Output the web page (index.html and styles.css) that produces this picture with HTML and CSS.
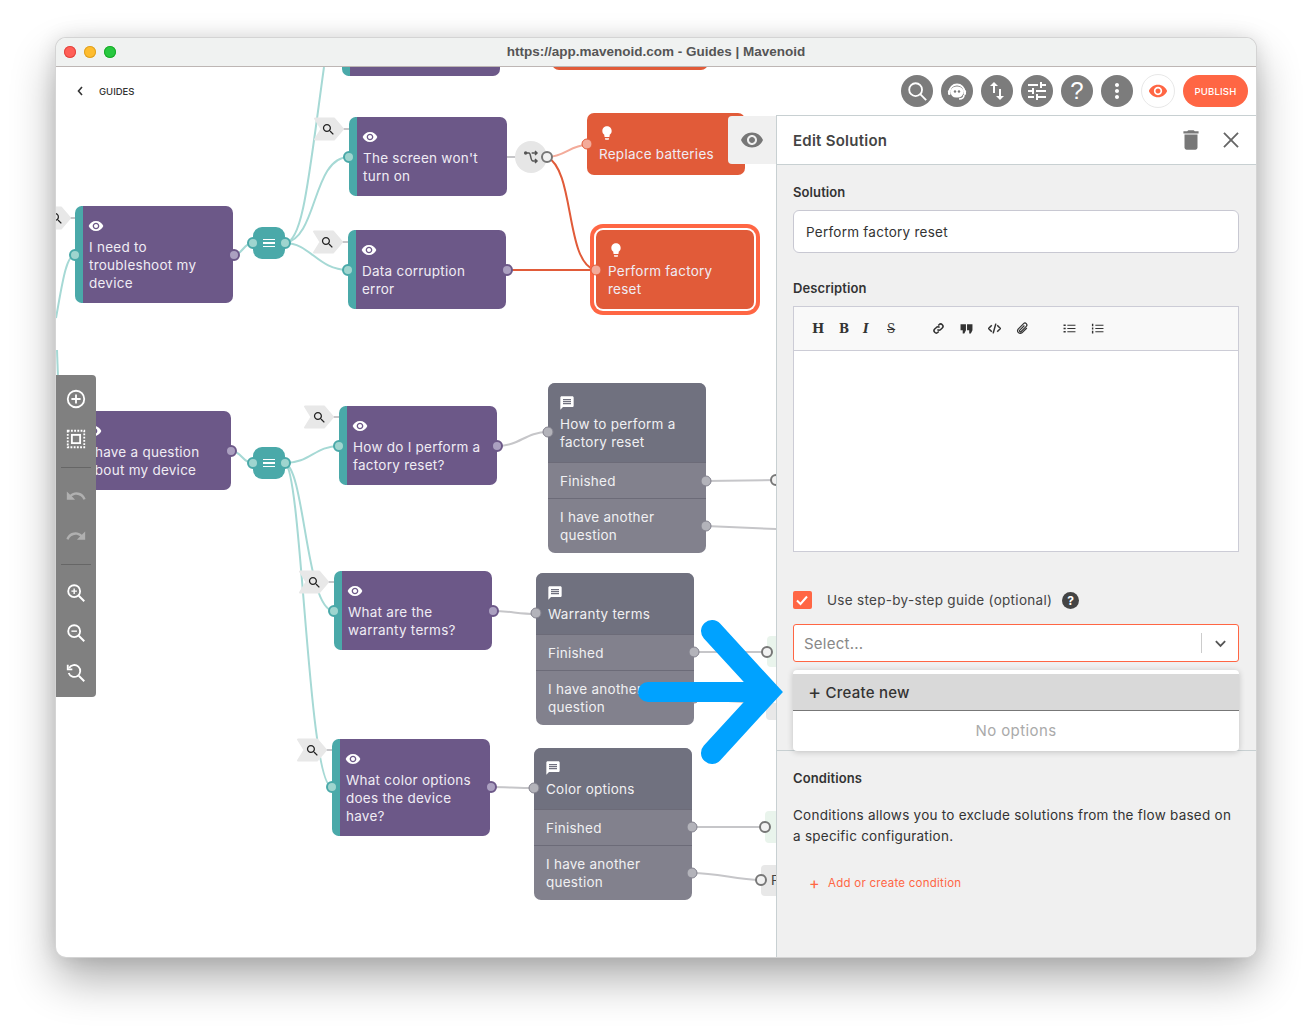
FILE: index.html
```html
<!DOCTYPE html>
<html lang="en">
<head>
<meta charset="utf-8">
<title>Guides | Mavenoid</title>
<link rel="stylesheet" href="styles.css">
</head>
<body>
<svg class="defs" width="0" height="0" aria-hidden="true">
  <defs>
    <symbol id="i-eye" viewBox="0 0 24 24"><path d="M12 4.5C7 4.5 2.73 7.61 1 12c1.73 4.39 6 7.5 11 7.5s9.27-3.11 11-7.5c-1.73-4.39-6-7.5-11-7.5zM12 17c-2.76 0-5-2.24-5-5s2.24-5 5-5 5 2.24 5 5-2.24 5-5 5zm0-8c-1.66 0-3 1.34-3 3s1.34 3 3 3 3-1.34 3-3-1.34-3-3-3z"/></symbol>
    <symbol id="i-bulb" viewBox="0 0 24 24"><path d="M9 21c0 .55.45 1 1 1h4c.55 0 1-.45 1-1v-1H9v1zm3-19C8.14 2 5 5.14 5 9c0 2.38 1.19 4.47 3 5.74V17c0 .55.45 1 1 1h6c.55 0 1-.45 1-1v-2.26c1.81-1.27 3-3.36 3-5.74 0-3.86-3.14-7-7-7z"/></symbol>
    <symbol id="i-msg" viewBox="0 0 24 24"><path d="M20 2H4c-1.1 0-1.99.9-1.99 2L2 22l4-4h14c1.1 0 2-.9 2-2V4c0-1.1-.9-2-2-2zm-2 12H6v-2h12v2zm0-3H6V9h12v2zm0-3H6V6h12v2z"/></symbol>
    <symbol id="i-search" viewBox="0 0 24 24"><path d="M15.5 14h-.79l-.28-.27C15.41 12.59 16 11.11 16 9.5 16 5.91 13.09 3 9.5 3S3 5.91 3 9.5 5.91 16 9.5 16c1.61 0 3.09-.59 4.23-1.57l.27.28v.79l5 4.99L20.49 19l-4.99-5zm-6 0C7.01 14 5 11.99 5 9.5S7.01 5 9.5 5 14 7.01 14 9.5 11.99 14 9.5 14z"/></symbol>
    <symbol id="i-tag" viewBox="0 0 32 24"><path d="M2 1.5H21L30 12L21 22.500H2L8.500 12Z" fill="#e8e8e8" stroke="#e8e8e8" stroke-width="2" stroke-linejoin="round"/></symbol>
  </defs>
</svg>

<div class="window">
  <div class="titlebar">
    <div class="lights">
      <span class="light light-red"></span>
      <span class="light light-yellow"></span>
      <span class="light light-green"></span>
    </div>
    <div class="window-title">https://app.mavenoid.com - Guides | Mavenoid</div>
  </div>

  <div class="main">
    <div class="viewport">
      <div class="canvas">
        <svg class="edges" width="1312" height="1031" viewBox="0 0 1312 1031">
          <g class="edge-teal">
            <path d="M285 243C303 243 309 175 324 67"/>
            <path d="M285 243C318 238 312 157 349 157"/>
            <path d="M285 243C310 243 318 270 348 270"/>
            <path d="M233 255C243 255 243 243 253 243"/>
            <path d="M56 318C62 285 66 255 75 255"/>
            <path d="M57 350L58 378"/>
            <path d="M231 451C242 451 242 463 253 463"/>
            <path d="M285 463C310 463 315 446 339 446"/>
            <path d="M285 463C305 470 306 611 334 611"/>
            <path d="M285 463C302 470 308 787 332 787"/>
          </g>
          <g class="edge-gray">
            <path d="M507 157H516"/>
            <path d="M497 446C520 446 525 432 548 432"/>
            <path d="M492 611C510 611 518 614 536 614"/>
            <path d="M490 787C505 787 518 788 534 788"/>
            <path d="M706 481L776 480"/>
            <path d="M706 526L776 529"/>
            <path d="M694 652L767 652"/>
            <path d="M694 698C720 700 750 703 776 704"/>
            <path d="M692 827L765 827"/>
            <path d="M692 873C720 873 735 880 761 880"/>
            <path d="M338 129H349"/>
            <path d="M337 242H348"/>
            <path d="M329 417H340"/>
            <path d="M324 582H335"/>
            <path d="M322 750H333"/>
            <path d="M66 218H76"/>
          </g>
          <path class="edge-salmon" d="M547 157C565 157 570 145 587 145"/>
          <path class="edge-orange" d="M547 157C575 170 565 262 595 270"/>
          <path class="edge-orange" d="M506 270H595"/>
        </svg>

        <svg class="tag tag-1"><use href="#i-tag"/></svg>
        <svg class="tag tag-2"><use href="#i-tag"/></svg>
        <svg class="tag tag-3"><use href="#i-tag"/></svg>
        <svg class="tag tag-4"><use href="#i-tag"/></svg>
        <svg class="tag tag-5"><use href="#i-tag"/></svg>
        <svg class="tag tag-6"><use href="#i-tag"/></svg>
        <svg class="glass glass-1"><use href="#i-search"/></svg>
        <svg class="glass glass-2"><use href="#i-search"/></svg>
        <svg class="glass glass-3"><use href="#i-search"/></svg>
        <svg class="glass glass-4"><use href="#i-search"/></svg>
        <svg class="glass glass-5"><use href="#i-search"/></svg>
        <svg class="glass glass-6"><use href="#i-search"/></svg>

        <div class="node purple pos-top-purple"></div>
        <div class="node orange pos-top-orange"></div>

        <div class="node purple pos-need"><svg class="ico"><use href="#i-eye"/></svg><p>I need to troubleshoot my device</p></div>
        <div class="node purple pos-screen"><svg class="ico"><use href="#i-eye"/></svg><p>The screen won't turn on</p></div>
        <div class="node purple pos-data"><svg class="ico"><use href="#i-eye"/></svg><p>Data corruption error</p></div>
        <div class="node purple pos-have"><svg class="ico"><use href="#i-eye"/></svg><p>I have a question about my device</p></div>
        <div class="node purple pos-how"><svg class="ico"><use href="#i-eye"/></svg><p>How do I perform a factory reset?</p></div>
        <div class="node purple pos-what"><svg class="ico"><use href="#i-eye"/></svg><p>What are the warranty terms?</p></div>
        <div class="node purple pos-color"><svg class="ico"><use href="#i-eye"/></svg><p>What color options does the device have?</p></div>

        <div class="node orange pos-replace"><svg class="ico"><use href="#i-bulb"/></svg><p>Replace batteries</p></div>
        <div class="node orange selected pos-reset"><svg class="ico"><use href="#i-bulb"/></svg><p>Perform factory reset</p></div>

        <div class="msg pos-m1">
          <div class="msg-head"><svg class="ico"><use href="#i-msg"/></svg><p>How to perform a factory reset</p></div>
          <div class="msg-row">Finished</div>
          <div class="msg-row">I have another question</div>
        </div>
        <div class="msg pos-m2">
          <div class="msg-head"><svg class="ico"><use href="#i-msg"/></svg><p>Warranty terms</p></div>
          <div class="msg-row">Finished</div>
          <div class="msg-row">I have another question</div>
        </div>
        <div class="msg pos-m3">
          <div class="msg-head"><svg class="ico"><use href="#i-msg"/></svg><p>Color options</p></div>
          <div class="msg-row">Finished</div>
          <div class="msg-row">I have another question</div>
        </div>

        <div class="menu-node pos-menu1"><span></span><span></span><span></span></div>
        <div class="menu-node pos-menu2"><span></span><span></span><span></span></div>

        <div class="branch">
          <svg viewBox="0 0 24 24" class="branch-ico"><circle cx="4" cy="6" r="2.600" fill="#555"/><path d="M4 6H9C12 6 11 18 15 18H20M13 6H20M18 3L21 6L18 9M18 15L21 18L18 21" fill="none" stroke="#555" stroke-width="2.200"/></svg>
        </div>

        <div class="stub stub-green stub-g1"></div>
        <div class="stub stub-green stub-g2"></div>
        <div class="stub stub-gray stub-g3"></div>
        <div class="stub stub-gray stub-g4">F</div>

        <svg class="ports" width="1312" height="1031" viewBox="0 0 1312 1031">
          <g class="p-teal">
            <circle cx="75" cy="255" r="5"/><circle cx="253" cy="243" r="5"/><circle cx="285" cy="243" r="5"/>
            <circle cx="349" cy="157" r="5"/><circle cx="348" cy="270" r="5"/>
            <circle cx="253" cy="463" r="5"/><circle cx="285" cy="463" r="5"/>
            <circle cx="339" cy="446" r="5"/><circle cx="334" cy="611" r="5"/><circle cx="332" cy="787" r="5"/>
          </g>
          <g class="p-purple">
            <circle cx="234" cy="255" r="5"/><circle cx="507" cy="270" r="5"/><circle cx="231" cy="451" r="5"/>
            <circle cx="497" cy="446" r="5"/><circle cx="493" cy="611" r="5"/><circle cx="491" cy="787" r="5"/>
          </g>
          <g class="p-gray">
            <circle cx="548" cy="432" r="5"/><circle cx="706" cy="481" r="5"/><circle cx="706" cy="526" r="5"/>
            <circle cx="536" cy="613" r="5"/><circle cx="694" cy="652" r="5"/><circle cx="694" cy="698" r="5"/>
            <circle cx="534" cy="788" r="5"/><circle cx="692" cy="827" r="5"/><circle cx="692" cy="873" r="5"/>
          </g>
          <g class="p-open">
            <circle cx="547" cy="157" r="5"/><circle cx="776" cy="480" r="5"/>
            <circle cx="767" cy="652" r="5"/><circle cx="765" cy="827" r="5"/><circle cx="761" cy="880" r="5"/>
          </g>
          <g class="p-orange">
            <circle cx="587" cy="144" r="5"/><circle cx="596" cy="270" r="5"/>
          </g>
        </svg>
      </div>
    </div>

    <div class="topbar">
      <a class="back">
        <svg class="back-ico" viewBox="0 0 8 12"><path d="M6 2L2.500 6L6 10" fill="none" stroke="#333" stroke-width="1.600"/></svg>
        <span class="back-label">GUIDES</span>
      </a>
      <div class="actions">
        <span class="round"><svg viewBox="0 0 24 24" class="ic-search"><circle cx="10.500" cy="10.500" r="7" fill="none" stroke="#fff" stroke-width="2"/><path d="M15.500 15.500L22 22" stroke="#fff" stroke-width="2"/></svg></span>
        <span class="round"><svg viewBox="0 0 24 24" class="ic-24"><path d="M4.500 13a7.500 7.500 0 0 1 15 0" fill="none" stroke="#fff" stroke-width="1.800"/><rect x="5.500" y="7.500" width="13" height="11" rx="5.500" fill="#fff"/><rect x="3" y="11" width="2.500" height="5" rx="1.200" fill="#fff"/><rect x="18.500" y="11" width="2.500" height="5" rx="1.200" fill="#fff"/><circle cx="10" cy="12.500" r="1.200" fill="#7c7c7c"/><circle cx="14" cy="12.500" r="1.200" fill="#7c7c7c"/><path d="M19 16c0 3-2 4-5 4" fill="none" stroke="#fff" stroke-width="1.600"/></svg></span>
        <span class="round"><svg viewBox="0 0 24 24" class="ic-24"><path d="M16 17.010V10h-2v7.010h-3L15 21l4-3.990h-3zM9 3L5 6.990h3V14h2V6.990h3L9 3z"/></svg></span>
        <span class="round"><svg viewBox="0 0 24 24" class="ic-24"><path d="M3 17v2h6v-2H3zM3 5v2h10V5H3zm10 16v-2h8v-2h-8v-2h-2v6h2zM7 9v2H3v2h4v2h2V9H7zm14 4v-2H11v2h10zm-6-4h2V7h4V5h-4V3h-2v6z"/></svg></span>
        <span class="round round-q">?</span>
        <span class="round"><svg viewBox="0 0 24 24" class="ic-24"><path d="M12 8c1.100 0 2-.9 2-2s-.9-2-2-2-2 .9-2 2 .9 2 2 2zm0 2c-1.100 0-2 .9-2 2s.9 2 2 2 2-.9 2-2-.9-2-2-2zm0 6c-1.100 0-2 .9-2 2s.9 2 2 2 2-.9 2-2-.9-2-2-2z"/></svg></span>
        <span class="round-eye"><svg class="ic-eye"><use href="#i-eye"/></svg></span>
        <span class="publish">PUBLISH</span>
      </div>
    </div>

    <div class="panel-row">
      <aside class="panel">
        <div class="eye-tab"><svg class="ic-tab"><use href="#i-eye"/></svg></div>
        <header class="panel-head">
          <h2>Edit Solution</h2>
          <div class="panel-tools">
            <svg viewBox="0 0 24 24" class="tool-trash"><path d="M6 19c0 1.100.9 2 2 2h8c1.100 0 2-.9 2-2V7H6v12zM19 4h-3.500l-1-1h-5l-1 1H5v2h14V4z"/></svg>
            <svg viewBox="0 0 24 24" class="tool-close"><path d="M5.500 5.500L18.500 18.500M18.500 5.500L5.500 18.500" fill="none" stroke="#666" stroke-width="1.700"/></svg>
          </div>
        </header>

        <div class="panel-body">
          <div class="label label-solution">Solution</div>
          <div class="input">Perform factory reset</div>

          <div class="label label-desc">Description</div>
          <div class="editor">
            <div class="editor-bar">
              <span class="fmt fmt-h">H</span>
              <span class="fmt fmt-b">B</span>
              <span class="fmt fmt-i">I</span>
              <span class="fmt fmt-s">S</span>
              <svg viewBox="0 0 24 24" class="tb-ic tb-link"><path d="M10 14a4 4 0 0 0 6 0l3-3a4 4 0 0 0-6-6l-1.500 1.500M14 10a4 4 0 0 0-6 0l-3 3a4 4 0 0 0 6 6l1.500-1.500" fill="none" stroke="#333" stroke-width="2.800"/></svg>
              <svg viewBox="0 0 24 24" class="tb-ic tb-quote"><path d="M5 21h3l3-6V4H1v11h4zm12 0h3l3-6V4H13v11h4z" fill="#333"/></svg>
              <svg viewBox="0 0 24 24" class="tb-ic tb-code"><path d="M7 6l-6 6 6 6M17 6l6 6-6 6M14.500 3l-5 18" fill="none" stroke="#333" stroke-width="2.800"/></svg>
              <svg viewBox="0 0 24 24" class="tb-ic tb-clip"><path d="M20 11l-9 9a5 5 0 0 1-7-7l10-10a3.300 3.300 0 0 1 5 5l-9.500 9.500a1.600 1.600 0 0 1-2.500-2.500l8.500-8.500" fill="none" stroke="#333" stroke-width="2.200"/></svg>
              <svg viewBox="0 0 24 24" class="tb-ic tb-ul"><path d="M8 6h15M8 12h15M8 18h15" stroke="#333" stroke-width="2"/><path d="M1 6h4M1 12h4M1 18h4" stroke="#333" stroke-width="3"/></svg>
              <svg viewBox="0 0 24 24" class="tb-ic tb-ol"><path d="M8 6h15M8 12h15M8 18h15" stroke="#333" stroke-width="2"/><path d="M3 3v5M3 10v4M3 16v5" stroke="#333" stroke-width="2.600"/></svg>
            </div>
            <div class="editor-area"></div>
          </div>

          <div class="check-row">
            <span class="checkbox"><svg viewBox="0 0 18 18"><path d="M4 9.500L7.500 13L14 5.500" fill="none" stroke="#fff" stroke-width="2"/></svg></span>
            <span class="check-label">Use step-by-step guide (optional)</span>
            <span class="hint">?</span>
          </div>

          <div class="select">
            <span class="select-ph">Select...</span>
            <span class="select-sep"></span>
            <svg viewBox="0 0 14 14" class="select-chev"><path d="M2 4.500L7 9.500L12 4.500" fill="none" stroke="#555" stroke-width="2"/></svg>
          </div>

          <div class="dropdown">
            <div class="dropdown-new"><span class="plus">+</span>Create new</div>
            <div class="dropdown-empty">No options</div>
          </div>
        </div>

        <section class="conditions">
          <div class="label">Conditions</div>
          <p class="cond-text">Conditions allows you to exclude solutions from the flow based on a specific configuration.</p>
          <a class="cond-add"><span class="cond-plus">+</span>Add or create condition</a>
        </section>
      </aside>
    </div>

    <nav class="toolbar">
      <svg viewBox="0 0 24 24" class="tl"><circle cx="12" cy="12" r="9" fill="none" stroke="#fff" stroke-width="2"/><path d="M12 7v10M7 12h10" stroke="#fff" stroke-width="2"/></svg>
      <svg viewBox="0 0 24 24" class="tl"><rect x="3" y="3" width="18" height="18" fill="none" stroke="#fff" stroke-width="2" stroke-dasharray="2 1.500"/><rect x="7.500" y="7.500" width="9" height="9" fill="none" stroke="#fff" stroke-width="2"/></svg>
      <hr class="tl-sep">
      <svg viewBox="0 0 24 24" class="tl tl-off"><path d="M12.500 8c-2.650 0-5.050.99-6.900 2.600L2 7v9h9l-3.620-3.620c1.390-1.160 3.160-1.880 5.120-1.880 3.540 0 6.550 2.310 7.600 5.500l2.370-.78C21.080 11.030 17.150 8 12.500 8z"/></svg>
      <svg viewBox="0 0 24 24" class="tl tl-off"><path d="M18.400 10.600C16.550 8.990 14.150 8 11.500 8c-4.650 0-8.580 3.030-9.960 7.220L3.900 16c1.050-3.190 4.050-5.500 7.600-5.500 1.950 0 3.730.72 5.120 1.880L13 16h9V7l-3.600 3.600z"/></svg>
      <hr class="tl-sep">
      <svg viewBox="0 0 24 24" class="tl"><circle cx="10" cy="10" r="6.500" fill="none" stroke="#fff" stroke-width="2"/><path d="M15 15l6 6" stroke="#fff" stroke-width="2.200"/><path d="M10 7v6M7 10h6" stroke="#fff" stroke-width="1.500"/></svg>
      <svg viewBox="0 0 24 24" class="tl"><circle cx="10" cy="10" r="6.500" fill="none" stroke="#fff" stroke-width="2"/><path d="M15 15l6 6" stroke="#fff" stroke-width="2.200"/><path d="M7 10h6" stroke="#fff" stroke-width="1.500"/></svg>
      <svg viewBox="0 0 24 24" class="tl"><path d="M4.500 6.500A6.500 6.500 0 1 1 4 12" fill="none" stroke="#fff" stroke-width="2"/><path d="M3 3v5h5" fill="none" stroke="#fff" stroke-width="2"/><path d="M15 15l6 6" stroke="#fff" stroke-width="2.200"/></svg>
    </nav>

    <svg class="arrow" width="1312" height="1031" viewBox="0 0 1312 1031">
      <path d="M712 631L768 692L712 753" fill="none" stroke="#00a2ff" stroke-width="22" stroke-linecap="round" stroke-linejoin="miter"/>
      <path d="M648 692H768" fill="none" stroke="#00a2ff" stroke-width="20" stroke-linecap="round"/>
    </svg>
  </div>
</div>
</body>
</html>
```

FILE: styles.css
```css
* { box-sizing: border-box; }
html, body { margin: 0; padding: 0; background: #fff; }
body {
  width: 1312px;
  height: 1031px;
  overflow: hidden;
  padding: 38px 56px 0;
  font-family: Inter, "Liberation Sans", sans-serif;
  letter-spacing: .25px;
  color: #333;
}
.defs { position: absolute; }
.window {
  width: 1200px;
  height: 919px;
  border-radius: 10px;
  overflow: hidden;
  display: flex;
  flex-direction: column;
  background: #fff;
  box-shadow: 0 0 0 1px #d4d4d4, 0 22px 45px rgba(0, 0, 0, .32), 0 0 20px rgba(0, 0, 0, .12);
}
.titlebar {
  height: 29px;
  flex: none;
  background: #f0f2f1;
  border-bottom: 1px solid #bdb6b4;
  display: flex;
  align-items: center;
  position: relative;
}
.lights { display: flex; gap: 8px; padding-left: 8px; }
.light { width: 12px; height: 12px; border-radius: 50%; }
.light-red { background: #ff5f57; box-shadow: inset 0 0 0 1px #e2463f; }
.light-yellow { background: #febc2e; box-shadow: inset 0 0 0 1px #dfa123; }
.light-green { background: #28c840; box-shadow: inset 0 0 0 1px #1aab29; }
.window-title {
  position: absolute;
  left: 0;
  right: 0;
  top: 6px;
  text-align: center;
  font: bold 13.5px "Liberation Sans", Arial, sans-serif;
  letter-spacing: 0;
  color: #555;
}
.main { position: relative; flex: 1; min-height: 0; display: flex; flex-direction: column; }
.viewport { position: absolute; inset: 0; overflow: hidden; }
.canvas { position: absolute; left: -56px; top: -67px; width: 1312px; height: 1031px; }
.edges, .ports { position: absolute; left: 0; top: 0; pointer-events: none; }
.arrow { position: absolute; left: -56px; top: -67px; pointer-events: none; }
.edges path { fill: none; }
.edge-teal path { stroke: #a6d9d5; stroke-width: 2; }
.edge-gray path { stroke: #c6c6c9; stroke-width: 2; }
.edge-salmon { stroke: #f3ab9a; stroke-width: 2; }
.edge-orange { stroke: #e15b39; stroke-width: 2; }

.tag { position: absolute; width: 32px; height: 24px; }
.tag-1 { left: 313px; top: 117px; }
.tag-2 { left: 312px; top: 230px; }
.tag-3 { left: 303px; top: 405px; }
.tag-4 { left: 298px; top: 570px; }
.tag-5 { left: 296px; top: 738px; }
.tag-6 { left: 40px; top: 206px; }
.glass { position: absolute; width: 15px; height: 15px; fill: #222; }
.glass-1 { left: 321px; top: 122px; }
.glass-2 { left: 320px; top: 235px; }
.glass-3 { left: 312px; top: 410px; }
.glass-4 { left: 307px; top: 575px; }
.glass-5 { left: 305px; top: 743px; }
.glass-6 { left: 49px; top: 211px; }

.node {
  position: absolute;
  width: 158px;
  padding: 13px 14px 11px 6px;
  border-radius: 7px;
  color: #f0ecf4;
  font-size: 13.5px;
  line-height: 18px;
}
.node p, .msg p { margin: 5px 0 0; }
.ico { display: block; width: 16px; height: 16px; margin: -1px 0 -1px -1px; fill: #fff; }
.purple { background: #6c5888; border-left: 8px solid #4aa9a9; }
.orange { background: #e15b39; padding: 13px 12px 12px 12px; }
.orange .ico { margin-left: 0; }
.selected { padding: 13px 30px 11px 12px; box-shadow: 0 0 0 2px #fff, 0 0 0 6px #ff6644; }
.pos-top-purple { left: 342px; top: 0; height: 76px; }
.pos-top-orange { left: 552px; top: 0; width: 156px; height: 70px; }
.pos-need { left: 75px; top: 206px; padding-right: 6px; }
.pos-screen { left: 349px; top: 117px; }
.pos-data { left: 348px; top: 230px; }
.pos-have { left: 73px; top: 411px; }
.pos-how { left: 339px; top: 406px; padding-right: 6px; }
.pos-what { left: 334px; top: 571px; }
.pos-color { left: 332px; top: 739px; padding-right: 6px; }
.pos-replace { left: 587px; top: 113px; }
.pos-reset { left: 596px; top: 230px; }

.msg {
  position: absolute;
  width: 158px;
  border-radius: 7px;
  overflow: hidden;
  color: #f0f0f2;
  font-size: 13.5px;
  line-height: 18px;
  background: #82818d;
}
.msg-head { background: #70717f; padding: 13px 12px 11px; }
.msg-row { padding: 9px 12px 8px; border-top: 1px solid #6c6b78; }
.msg-row:last-child { padding-bottom: 9px; }
.pos-m1 { left: 548px; top: 383px; }
.pos-m2 { left: 536px; top: 573px; }
.pos-m3 { left: 534px; top: 748px; }

.menu-node {
  position: absolute;
  width: 32px;
  height: 32px;
  border-radius: 9px;
  background: #4aa9a9;
  display: flex;
  flex-direction: column;
  justify-content: center;
  align-items: center;
  gap: 2px;
}
.menu-node span { width: 12px; height: 1.5px; background: #fff; }
.pos-menu1 { left: 253px; top: 227px; }
.pos-menu2 { left: 253px; top: 447px; }
.branch {
  position: absolute;
  left: 515px;
  top: 141px;
  width: 32px;
  height: 32px;
  border-radius: 50%;
  background: #e6e6e6;
  display: flex;
  align-items: center;
  justify-content: center;
}
.branch-ico { width: 16px; height: 16px; }
.stub { position: absolute; border-radius: 4px; }
.stub-green { background: #e9f4ec; width: 14px; }
.stub-gray { background: #e8e8e8; width: 20px; color: #444; font-size: 13.5px; line-height: 30px; padding-left: 10px; }
.stub-g1 { left: 767px; top: 636px; height: 31px; }
.stub-g2 { left: 765px; top: 811px; height: 32px; }
.stub-g3 { left: 766px; top: 703px; height: 17px; }
.stub-g4 { left: 761px; top: 865px; height: 31px; }

.p-teal circle { fill: #9fd5cf; stroke: #4aa9a9; stroke-width: 2; }
.p-purple circle { fill: #aba0c0; stroke: #6c5888; stroke-width: 2; }
.p-gray circle { fill: #b3b3ba; stroke: #82818d; stroke-width: 1; }
.p-open circle { fill: #f2f2f2; stroke: #777; stroke-width: 2; }
.p-orange circle { fill: #f3ab9a; stroke: #e15b39; stroke-width: 1; }

.topbar {
  position: relative;
  flex: none;
  height: 48px;
  display: flex;
  align-items: center;
  justify-content: space-between;
  padding: 0 8px 0 20px;
}
.back { display: flex; align-items: center; gap: 15px; }
.back-ico { width: 8px; height: 12px; }
.back-label { font-size: 9.5px; font-weight: 500; letter-spacing: 0; color: #333; }
.actions { display: flex; align-items: center; gap: 8px; }
.round {
  width: 32px;
  height: 32px;
  border-radius: 50%;
  background: #7c7c7c;
  display: flex;
  align-items: center;
  justify-content: center;
  color: #fff;
}
.ic-24 { width: 24px; height: 24px; fill: #fff; }
.ic-search { width: 22px; height: 22px; }
.round-q { font: 24px/32px "Liberation Sans", sans-serif; }
.round-eye {
  width: 34px;
  height: 34px;
  border-radius: 50%;
  background: #fff;
  border: 1px solid #e8e8e8;
  display: flex;
  align-items: center;
  justify-content: center;
}
.ic-eye { width: 20px; height: 20px; fill: #ff6644; }
.publish {
  width: 65px;
  height: 32px;
  border-radius: 16px;
  background: #ff6644;
  color: #fff;
  font-size: 9.5px;
  font-weight: 500;
  letter-spacing: .2px;
  display: flex;
  align-items: center;
  justify-content: center;
}

.panel-row { position: relative; flex: 1; min-height: 0; display: flex; justify-content: flex-end; }
.panel {
  position: relative;
  width: 480px;
  background: #f0f0f0;
  border-left: 1px solid #c8d0d2;
  border-top: 1px solid #c8d0d2;
  display: flex;
  flex-direction: column;
}
.eye-tab {
  position: absolute;
  right: 100%;
  margin-right: 1px;
  top: 0;
  width: 48px;
  height: 48px;
  background: #f0f0f0;
  border-radius: 4px 0 0 4px;
  display: flex;
  align-items: center;
  justify-content: center;
}
.ic-tab { width: 24px; height: 24px; fill: #777; }
.panel-head {
  height: 49px;
  flex: none;
  background: #fff;
  border-bottom: 1px solid #c8d0d2;
  display: flex;
  align-items: center;
  justify-content: space-between;
  padding: 0 12px 0 16px;
}
.panel-head h2 { margin: 0; font-size: 15px; font-weight: 600; color: #444; }
.panel-tools { display: flex; align-items: center; gap: 14px; }
.tool-trash { width: 26px; height: 26px; fill: #777; }
.tool-close { width: 26px; height: 26px; }
.panel-body { padding: 0 17px 0 16px; flex: none; display: flex; flex-direction: column; }
.label { font-size: 13px; font-weight: 600; line-height: 16px; letter-spacing: .1px; color: #333; }
.label-solution { margin-top: 19px; }
.label-desc { margin-top: 27px; }
.input {
  margin-top: 10px;
  height: 43px;
  background: #fff;
  border: 1px solid #c8c8d2;
  border-radius: 6px;
  padding: 0 12px;
  display: flex;
  align-items: center;
  font-size: 13.5px;
  color: #333;
}
.editor {
  margin-top: 10px;
  height: 246px;
  background: #fff;
  border: 1px solid #ccccd6;
  display: flex;
  flex-direction: column;
}
.editor-bar {
  height: 44px;
  flex: none;
  background: #f9f9f9;
  border-bottom: 1px solid #ccccd6;
  position: relative;
  display: flex;
  align-items: center;
  padding-left: 18px;
}
.fmt { font: bold 13px/1 "DejaVu Serif", serif; letter-spacing: 0; color: #333; width: 27px; }
.fmt-h { width: 27px; }
.fmt-b { width: 24px; font-size: 12px; }
.fmt-i { width: 24px; font-style: italic; font-size: 12px; }
.fmt-s { width: 45px; text-decoration: line-through; font-size: 12px; font-weight: normal; }
.tb-ic { width: 13px; height: 13px; margin-right: 15px; flex: none; }
.tb-clip { margin-right: 34px; }
.editor-area { flex: 1; }
.check-row { margin-top: 39px; height: 18px; display: flex; align-items: center; }
.checkbox {
  width: 19px;
  height: 18px;
  background: #ff6644;
  border-radius: 2px;
  display: flex;
}
.check-label { margin-left: 15px; font-size: 13.5px; letter-spacing: .3px; color: #444; }
.hint {
  margin-left: 10px;
  width: 17px;
  height: 17px;
  border-radius: 50%;
  background: #444;
  color: #fff;
  font-size: 12px;
  font-weight: 700;
  display: flex;
  align-items: center;
  justify-content: center;
}
.select {
  margin-top: 15px;
  height: 38px;
  background: #fff;
  border: 1px solid #ff6644;
  border-radius: 3px;
  display: flex;
  align-items: center;
  padding: 0 11px 0 10px;
}
.select-ph { flex: 1; font-size: 15px; color: #888; }
.select-sep { width: 1px; height: 20px; background: #ccc; margin-right: 12px; }
.select-chev { width: 13px; height: 13px; }
.dropdown {
  position: relative;
  z-index: 1;
  margin: 8px 0 0;
  height: 81px;
  background: #fff;
  border-radius: 4px;
  padding-top: 4px;
  box-shadow: 0 1px 6px rgba(0, 0, 0, .2);
}
.dropdown-new {
  height: 37px;
  background: #d9d9d9;
  border-bottom: 1px solid #777;
  display: flex;
  align-items: center;
  padding-left: 15px;
  font-size: 15px;
  font-weight: 500;
  color: #333;
}
.plus { font-size: 20px; font-weight: 400; line-height: 1; margin-right: 4px; }
.dropdown-empty { text-align: center; line-height: 39px; font-size: 15px; letter-spacing: .4px; color: #aaa; }
.conditions {
  margin-top: -1px;
  border-top: 1px solid #c8d0d2;
  padding: 19px 17px 0 16px;
}
.cond-text { margin: 19px 0 0; font-size: 13.5px; line-height: 21px; color: #333; }
.cond-add {
  margin: 28px 0 0 16px;
  display: flex;
  align-items: center;
  height: 16px;
  font-size: 11.5px;
  color: #ff6644;
}
.cond-plus { font-size: 16px; width: 19px; }

.toolbar {
  position: absolute;
  left: 0;
  top: 308px;
  width: 40px;
  height: 322px;
  background: #808080;
  border-radius: 0 4px 4px 0;
  display: flex;
  flex-direction: column;
  align-items: center;
  padding-top: 13px;
}
.tl { width: 22px; height: 22px; flex: none; margin-bottom: 18px; fill: #fff; }
.tl:last-child { margin-bottom: 0; }
.tl-off { fill: #b0b0b0; }
.tl-sep { width: 30px; height: 1px; flex: none; border: 0; background: #666; margin: -1px 0 17px; }
```
